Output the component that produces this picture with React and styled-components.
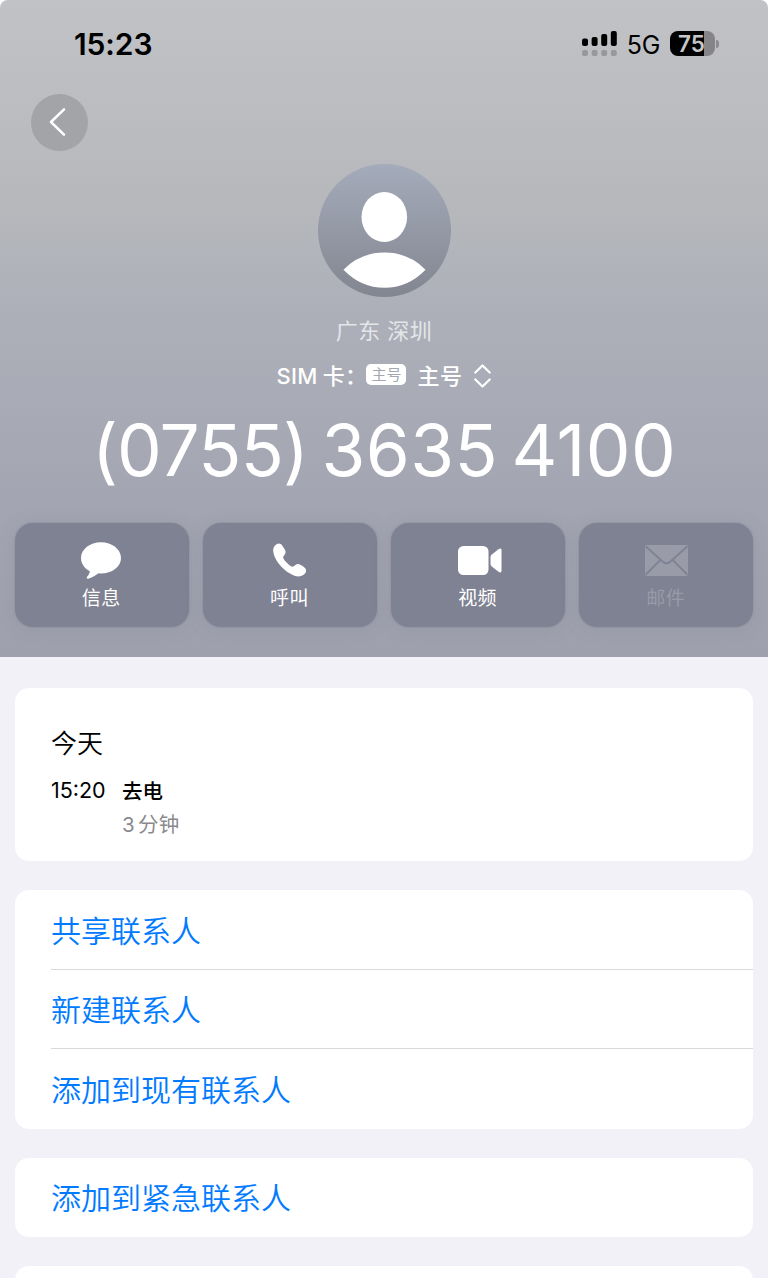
import React from "react";
import styled, { createGlobalStyle } from "styled-components";

const GlobalStyle = createGlobalStyle`
  *, *::before, *::after { box-sizing: border-box; }
  html, body { margin: 0; padding: 0; background: #fff; }
  body {
    font-family: Inter, "Noto Sans CJK SC", sans-serif;
    -webkit-font-smoothing: antialiased;
  }
  svg { display: block; }
`;

const Screen = styled.main`
  width: 768px;
  height: 1278px;
  overflow: hidden;
  border-radius: 8px 8px 0 0;
  background: #f2f1f7;
  display: flex;
  flex-direction: column;
`;

const Hero = styled.header`
  height: 657px;
  flex: none;
  display: flex;
  flex-direction: column;
  align-items: center;
  color: #fff;
  background: linear-gradient(
    180deg,
    #c1c2c6 0%,
    #bcbdc1 16%,
    #b5b7bb 33%,
    #adb0b9 47%,
    #a8abb5 62%,
    #a3a5b2 76%,
    #9ea0ad 100%
  );
`;

const StatusBar = styled.div`
  width: 100%;
  height: 94px;
  flex: none;
  padding: 0 49.5px 6px 74px;
  display: flex;
  justify-content: space-between;
  align-items: center;
  color: #000;
`;

const Clock = styled.time`
  font-size: 30px;
  font-weight: 600;
  line-height: 36px;
  letter-spacing: -0.1px;
`;

const StatusIcons = styled.div`
  display: flex;
  align-items: center;
  margin-top: -1px;
`;

const Network = styled.span`
  margin: 2px 10px 0 9px;
  font-size: 25px;
  line-height: 30px;
  letter-spacing: -0.3px;
`;

const Battery = styled.div`
  display: flex;
  align-items: center;
  gap: 1px;
`;

const BatteryBody = styled.div`
  width: 45px;
  height: 25px;
  border-radius: 8px;
  padding-left: 8px;
  background: linear-gradient(90deg, #000 ${(p) => p.$level}%, #858588 ${(p) => p.$level}%);
  color: #c6c7ca;
  font-size: 22.5px;
  font-weight: 600;
  line-height: 26px;
  letter-spacing: 0;
`;

const BatteryTip = styled.i`
  width: 2.5px;
  height: 8px;
  border-radius: 0 3px 3px 0;
  background: #8b8b8f;
`;

const NavRow = styled.nav`
  width: 100%;
  padding-left: 31px;
`;

const BackButton = styled.button`
  width: 57px;
  height: 57px;
  padding: 0 3px 1px 0;
  border: 0;
  border-radius: 50%;
  background: #a3a4a7;
  display: grid;
  place-items: center;
`;

const Avatar = styled.div`
  width: 133px;
  height: 133px;
  margin-top: 13px;
  border-radius: 50%;
  overflow: hidden;
  background: linear-gradient(180deg, #a4abba, #838690);
`;

const Location = styled.div`
  margin-top: 16.5px;
  height: 34px;
  font-size: 22px;
  line-height: 34px;
  letter-spacing: 0.5px;
  color: #e4e5e8;
`;

const SimRow = styled.div`
  margin-top: 11.5px;
  height: 34px;
  padding-right: 1px;
  display: flex;
  align-items: center;
  font-size: 22px;
  font-weight: 500;
  line-height: 34px;
  white-space: nowrap;
`;

const SimLabel = styled.span`
  width: 90px;
  display: flex;
  gap: 5px;
  letter-spacing: 0.3px;
`;

const SimColon = styled.span`
  margin-left: -5px;
`;

const SimBadge = styled.span`
  width: 40px;
  height: 21px;
  margin: 0 11px 4px 0;
  border-radius: 5px;
  background: #fff;
  color: #a4a6b1;
  font-size: 15px;
  font-weight: 400;
  line-height: 21px;
  text-align: center;
`;

const SimName = styled.span`
  margin-right: 11px;
  letter-spacing: 0.5px;
`;

const PhoneNumber = styled.h1`
  margin: 12px 0 0;
  height: 90px;
  font-size: 71px;
  font-weight: 400;
  line-height: 90px;
  letter-spacing: 0.4px;
  word-spacing: -6.9px;
  white-space: nowrap;
`;

const AreaCode = styled.span`
  letter-spacing: -0.8px;
`;

const Actions = styled.div`
  width: 100%;
  margin-top: 27.5px;
  padding: 0 15px;
  display: grid;
  grid-template-columns: repeat(4, 1fr);
  gap: 14.6px;
`;

const Action = styled.button`
  height: 104px;
  padding: 17px 1px 0 0;
  border: 0;
  border-radius: 18px;
  background: #7f8292;
  box-shadow: 0 2px 18px rgba(110, 114, 130, 0.16), 0 0 1px 0.5px rgba(140, 142, 156, 0.4);
  color: ${(p) => (p.$muted ? "#999ba8" : "#fff")};
  display: flex;
  flex-direction: column;
  justify-content: flex-start;
  align-items: center;
  gap: 4px;
  font-family: inherit;
  font-size: 19px;
  line-height: 28px;
  letter-spacing: 0.4px;
`;

const ActionIcon = styled.span`
  height: 41px;
  padding-left: ${(p) => p.$shift || 0}px;
  display: flex;
  align-items: center;
`;

const Cards = styled.div`
  padding: 30.5px 15px 0;
  display: flex;
  flex-direction: column;
  gap: 29px;
`;

const Card = styled.section`
  flex: none;
  border-radius: 14px;
  background: #fff;
  overflow: hidden;
`;

const CallCard = styled(Card)`
  height: 173.5px;
  padding: 36.5px 36px 0;
`;

const DayTitle = styled.h2`
  margin: 0;
  font-size: 26px;
  font-weight: 350;
  line-height: 40px;
  color: #000;
`;

const CallRow = styled.div`
  margin-top: 11px;
  display: grid;
  grid-template-columns: 71px 1fr;
  line-height: 33px;
  color: #000;
`;

const CallTime = styled.time`
  font-size: 21.5px;
  line-height: 31px;
`;

const CallKind = styled.strong`
  font-size: 20.5px;
  font-weight: 500;
`;

const CallLength = styled.span`
  grid-column: 2;
  display: flex;
  gap: 3px;
  font-size: 20.5px;
  letter-spacing: 0.3px;
  color: #8a8a8e;
`;

const LinkRow = styled.button`
  width: 100%;
  height: 79.5px;
  padding: 0 0 0 36px;
  border: 0;
  background: none;
  display: block;
  font-family: inherit;
  font-size: 30px;
  font-weight: 350;
  text-align: left;
  color: #007aff;
`;

const LinkText = styled.span`
  height: 100%;
  display: flex;
  align-items: center;
  padding-bottom: ${(p) => (p.$last ? 2 : 1)}px;
  border-bottom: ${(p) => (p.$last ? "0" : "1px solid #d9d9dc")};
`;

const SignalIcon = () => (
  <svg width="36" height="25" viewBox="0 0 36 25">
    {[7.5, 9, 12, 15].map((h, i) => (
      <g key={h}>
        <rect x={i * 9.6} y={15 - h} width="6" height={h} rx="2" fill="#000" />
        <rect x={i * 9.6} y="19" width="6" height="6" rx="2" fill="#98989c" />
      </g>
    ))}
  </svg>
);

const BackIcon = () => (
  <svg width="18" height="30" viewBox="0 0 18 30" fill="none" stroke="#fff" strokeWidth="2.5" strokeLinecap="round" strokeLinejoin="round">
    <path d="M15 2.3 2 15l13 12.7" />
  </svg>
);

const PersonIcon = () => (
  <svg width="133" height="133" viewBox="0 0 133 133" fill="#fff">
    <ellipse cx="66.3" cy="53" rx="22.8" ry="25" />
    <path d="M25.5 105.7Q42 88.6 66.5 88.6T107.500 105.700Q90 123.800 66.500 123.800T25.500 105.700Z" />
  </svg>
);

const SelectorIcon = () => (
  <svg width="17" height="24" viewBox="0 0 17 24" fill="none" stroke="#fff" strokeWidth="2.2" strokeLinecap="round" strokeLinejoin="round">
    <path d="m1.300 8.500 7.200-7 7.200 7M1.300 15.500l7.200 7 7.200-7" />
  </svg>
);

const MessageIcon = () => (
  <svg width="40" height="37" viewBox="0 0 40 37" fill="currentColor">
    <path d="M20 .2C31 .2 40 7.100 40 16S31 31.500 20 31.500c-.9 0-1.800 0-2.600-.2-3.200 2.400-6.500 4.600-10.200 5.400-1.300.3-2-.9-1.100-1.900 1.500-1.700 2.500-3.200 2.700-5.500C3.300 26.200 0 21.500 0 16 0 7.100 9 .2 20 .2Z" />
  </svg>
);

const PhoneIcon = () => (
  <svg width="33.500" height="33.800" viewBox="817.500 100 100.500 101" fill="currentColor">
    <path d="M836 101C842 101 846 108 849 113C853 119 856 123 855 129C854 136 848 138 848 143C848 148 855 155 860 160C866 166 871 171 876 171C881 171 885 164 891 163C896 162 901 166 906 169C912 173 917 177 917 183C916 192 906 200 894 200C880 200 858 187 842 170C828 155 818 137 818 121C818 111 827 101 836 101Z" />
  </svg>
);

const VideoIcon = () => (
  <svg width="44" height="29" viewBox="0 0 44 29" fill="currentColor">
    <rect width="30.500" height="29" rx="5.500" />
    <path d="M32.500 11.500q0-1.800 1.300-3l6.700-5.300q3-2 3 1v20.600q0 3-3 1l-6.700-5.300q-1.300-1.200-1.300-3z" />
  </svg>
);

const MailIcon = () => (
  <svg width="43" height="31" viewBox="0 0 43 31">
    <rect width="43" height="31" rx="2" fill="currentColor" />
    <path d="m.8 1.500 17 15.200q3.700 3.200 7.400 0l17-15.200M.8 29.500l14.400-14.300M42.200 29.500 27.800 15.200" fill="none" stroke="#7f8292" strokeWidth="1.900" />
  </svg>
);

const actions = [
  { label: "信息", Icon: MessageIcon },
  { label: "呼叫", Icon: PhoneIcon },
  { label: "视频", Icon: VideoIcon, shift: 5 },
  { label: "邮件", Icon: MailIcon, shift: 1, muted: true },
];

const linkGroups = [
  ["共享联系人", "新建联系人", "添加到现有联系人"],
  ["添加到紧急联系人"],
];

const NextCard = styled(Card)`
  height: 80px;
`;

export default function App() {
  return (
    <>
      <GlobalStyle />
      <Screen>
        <Hero>
          <StatusBar>
            <Clock>15:23</Clock>
            <StatusIcons>
              <SignalIcon />
              <Network>5G</Network>
              <Battery>
                <BatteryBody $level={75}>75</BatteryBody>
                <BatteryTip />
              </Battery>
            </StatusIcons>
          </StatusBar>
          <NavRow>
            <BackButton aria-label="返回">
              <BackIcon />
            </BackButton>
          </NavRow>
          <Avatar>
            <PersonIcon />
          </Avatar>
          <Location>广东 深圳</Location>
          <SimRow>
            <SimLabel>
              <span>SIM</span>
              <span>卡</span>
              <SimColon>：</SimColon>
            </SimLabel>
            <SimBadge>主号</SimBadge>
            <SimName>主号</SimName>
            <SelectorIcon />
          </SimRow>
          <PhoneNumber>
            <AreaCode>(0755)</AreaCode> 3635 4100
          </PhoneNumber>
          <Actions>
            {actions.map(({ label, Icon, muted, shift }) => (
              <Action key={label} $muted={muted}>
                <ActionIcon $shift={shift}>
                  <Icon />
                </ActionIcon>
                {label}
              </Action>
            ))}
          </Actions>
        </Hero>
        <Cards>
          <CallCard>
            <DayTitle>今天</DayTitle>
            <CallRow>
              <CallTime>15:20</CallTime>
              <CallKind>去电</CallKind>
              <CallLength>
                <span>3</span>
                <span>分钟</span>
              </CallLength>
            </CallRow>
          </CallCard>
          {linkGroups.map((links) => (
            <Card key={links[0]}>
              {links.map((text, i) => (
                <LinkRow key={text}>
                  <LinkText $last={i === links.length - 1}>{text}</LinkText>
                </LinkRow>
              ))}
            </Card>
          ))}
          <NextCard />
        </Cards>
      </Screen>
    </>
  );
}
